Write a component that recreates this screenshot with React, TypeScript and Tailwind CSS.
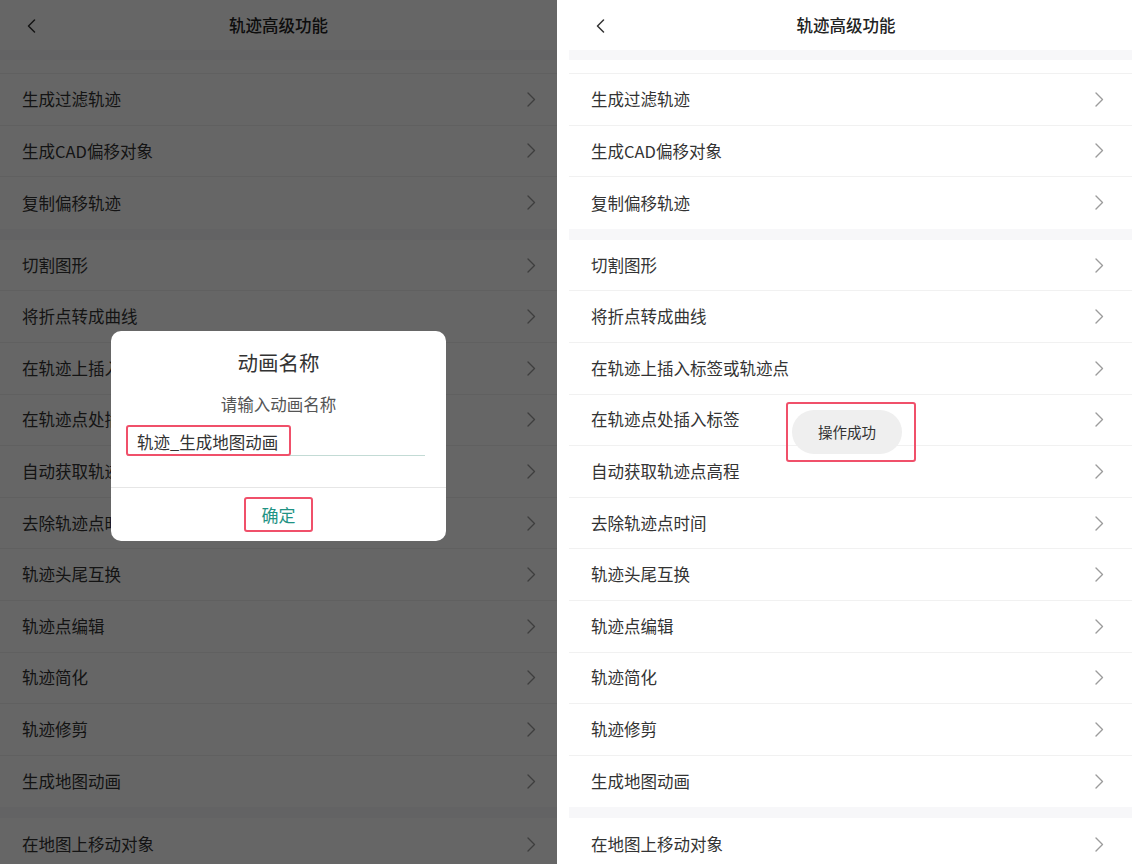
import React from 'react'

const sections = [
  ['生成过滤轨迹', '生成CAD偏移对象', '复制偏移轨迹'],
  [
    '切割图形',
    '将折点转成曲线',
    '在轨迹上插入标签或轨迹点',
    '在轨迹点处插入标签',
    '自动获取轨迹点高程',
    '去除轨迹点时间',
    '轨迹头尾互换',
    '轨迹点编辑',
    '轨迹简化',
    '轨迹修剪',
    '生成地图动画',
  ],
  ['在地图上移动对象'],
]

function Chevron() {
  return (
    <svg width="9" height="15" viewBox="0 0 9 15" fill="none">
      <polyline points="1,1 7.5,7.5 1,14" stroke="#9c9c9c" strokeWidth="1.4" strokeLinecap="round" strokeLinejoin="round" />
    </svg>
  )
}

function Back() {
  return (
    <svg width="9" height="14" viewBox="0 0 9 14" fill="none">
      <polyline points="7.5,1 1.5,7 7.5,13" stroke="#333" strokeWidth="1.5" strokeLinecap="round" strokeLinejoin="round" />
    </svg>
  )
}

function Screen({ wide }: { wide?: boolean }) {
  return (
    <div className="flex flex-col bg-white">
      <div className={`grid h-[50px] items-center ${wide ? 'grid-cols-[60px_1fr_69px]' : 'grid-cols-[60px_1fr_60px]'}`}>
        <div className="pl-[27px] pt-[1px]">
          <Back />
        </div>
        <div className="text-center text-[16.5px] font-medium text-[#222]">轨迹高级功能</div>
        <div />
      </div>
      <div className="h-[10px] bg-[#f7f7f9]" />
      <div className="h-[14px] border-b border-[#f1f1f1]" />
      {sections.map((items, si) => (
        <div key={si}>
          {si > 0 && <div className="h-[11px] bg-[#f7f7f9]" />}
          {items.map((label, i) => (
            <div
              key={label}
              className={`flex h-[51.6px] items-center justify-between pl-[22px] ${wide ? 'pr-[28px]' : 'pr-[21px]'} ${i < items.length - 1 ? 'border-b border-[#f1f1f1]' : ''}`}
            >
              <span className="text-[16.5px] text-[#333]">{label}</span>
              <Chevron />
            </div>
          ))}
        </div>
      ))}
    </div>
  )
}

export default function App() {
  return (
    <div className="flex h-[864px] w-[1132px] overflow-hidden bg-white font-['Noto_Sans_CJK_SC','Noto_Sans',sans-serif]">
      <div className="relative h-full w-[557px] shrink-0 overflow-hidden">
        <Screen />
        <div className="absolute inset-0 bg-black/60" />
        <div className="absolute left-[111px] top-[331px] flex h-[210px] w-[335px] flex-col rounded-[10px] bg-white">
          <div className="pt-[17px] text-center text-[20.5px] leading-[28px] text-[#333]">动画名称</div>
          <div className="mt-[16px] text-center text-[16.5px] leading-[24px] text-[#555]">请输入动画名称</div>
          <div className="relative ml-[16px] mr-[21px] mt-[13px] h-[27px] border-b border-[#c3dbd5] pl-[10px] text-[16.5px] leading-[26px] text-[#333]">
            轨迹_生成地图动画
            <div className="absolute left-[-1px] top-[-4px] h-[31px] w-[165px] rounded-[3px] border-2 border-[#f0506a]" />
          </div>
          <div className="mt-[31px] border-t border-[#e6e6e6]" />
          <div className="flex flex-1 items-center justify-center">
            <div className="flex h-[35px] w-[69px] items-center justify-center rounded-[3px] border-2 border-[#f0506a] text-[17px] text-[#1f9384]">
              确定
            </div>
          </div>
        </div>
      </div>
      <div className="w-[12px] shrink-0 bg-white" />
      <div className="relative h-full flex-1 overflow-hidden">
        <Screen wide />
        <div className="absolute left-[217px] top-[402px] flex h-[60px] w-[130px] items-center rounded-[3px] border-2 border-[#f0506a] pl-[4px]">
          <div className="flex h-[44px] w-[110px] items-center justify-center rounded-full bg-[#efefef] text-[14.5px] text-[#333]">
            操作成功
          </div>
        </div>
      </div>
    </div>
  )
}
